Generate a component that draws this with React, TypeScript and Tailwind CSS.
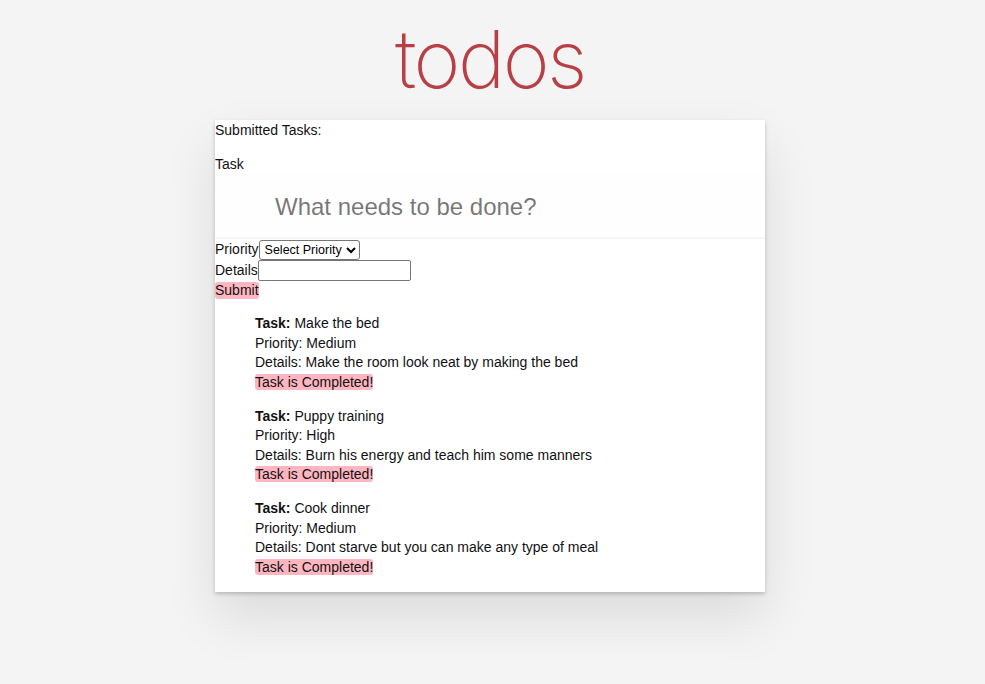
import React, { useState } from 'react';

type Task = {
  task: string;
  priority: string;
  details: string;
};

const initialTasks: Task[] = [
  { task: 'Make the bed', priority: 'Medium', details: 'Make the room look neat by making the bed' },
  { task: 'Puppy training', priority: 'High', details: 'Burn his energy and teach him some manners' },
  { task: 'Cook dinner', priority: 'Medium', details: 'Dont starve but you can make any type of meal' },
];

export default function App() {
  const [tasks] = useState<Task[]>(initialTasks);
  const [title, setTitle] = useState('');
  const [priority, setPriority] = useState('');
  const [details, setDetails] = useState('');

  return (
    <div className="min-h-screen bg-[#f4f4f4] pt-[19px] font-['Helvetica_Neue','Liberation_Sans',Arial,sans-serif] text-[14px] leading-[1.4em] font-light text-[#111]">
      <div className="w-[980px]">
        <h1 className="mb-[21px] text-center font-['Inter','Liberation_Sans',sans-serif] text-[80px] leading-[80px] font-extralight tracking-[-2.5px] text-[#b83f45]">
          todos
        </h1>

        <section className="mx-auto w-[550px] bg-white pt-[1px] shadow-[0_2px_4px_0_rgba(0,0,0,0.2),0_25px_50px_0_rgba(0,0,0,0.1)]">
          <p>Submitted Tasks:</p>

          <form onSubmit={(e) => e.preventDefault()}>
            <label className="mt-[14px] block">Task</label>
            <input
              value={title}
              onChange={(e) => setTitle(e.target.value)}
              placeholder="What needs to be done?"
              className="block h-[65px] w-full bg-[rgba(0,0,0,0.003)] py-4 pr-4 pl-[60px] text-[24px] leading-[1.4em] font-light shadow-[inset_0_-2px_1px_rgba(0,0,0,0.03)] outline-none placeholder:text-[rgba(0,0,0,0.55)]"
            />

            <div className="mt-[1px] flex h-[20px] items-center">
              <label>Priority</label>
              <select
                value={priority}
                onChange={(e) => setPriority(e.target.value)}
                className="h-[20px] rounded-[3px] border border-[#767676] bg-white pl-[1px] text-[12.5px] leading-none font-normal text-black"
              >
                <option value="">Select Priority</option>
                <option value="Low">Low</option>
                <option value="Medium">Medium</option>
                <option value="High">High</option>
              </select>
            </div>

            <div className="flex h-[21px] items-center">
              <label>Details</label>
              <input
                value={details}
                onChange={(e) => setDetails(e.target.value)}
                className="h-[21px] w-[153px] rounded-[2px] border border-[#767676] px-[2px] text-[13.33px] font-normal text-black outline-none"
              />
            </div>

            <button type="submit" className="mt-[1px] block rounded-[3px] bg-[#ffb6c1] leading-[17px]">
              Submit
            </button>
          </form>

          <ul className="space-y-[14px] pt-[15px] pb-[15px] pl-[40px]">
            {tasks.map((t) => (
              <li key={t.task}>
                <div>
                  <strong className="font-bold">Task:</strong> {t.task}
                </div>
                <div>Priority: {t.priority}</div>
                <div>Details: {t.details}</div>
                <span className="rounded-[3px] bg-[#ffb6c1]">Task is Completed!</span>
              </li>
            ))}
          </ul>
        </section>
      </div>
    </div>
  );
}
